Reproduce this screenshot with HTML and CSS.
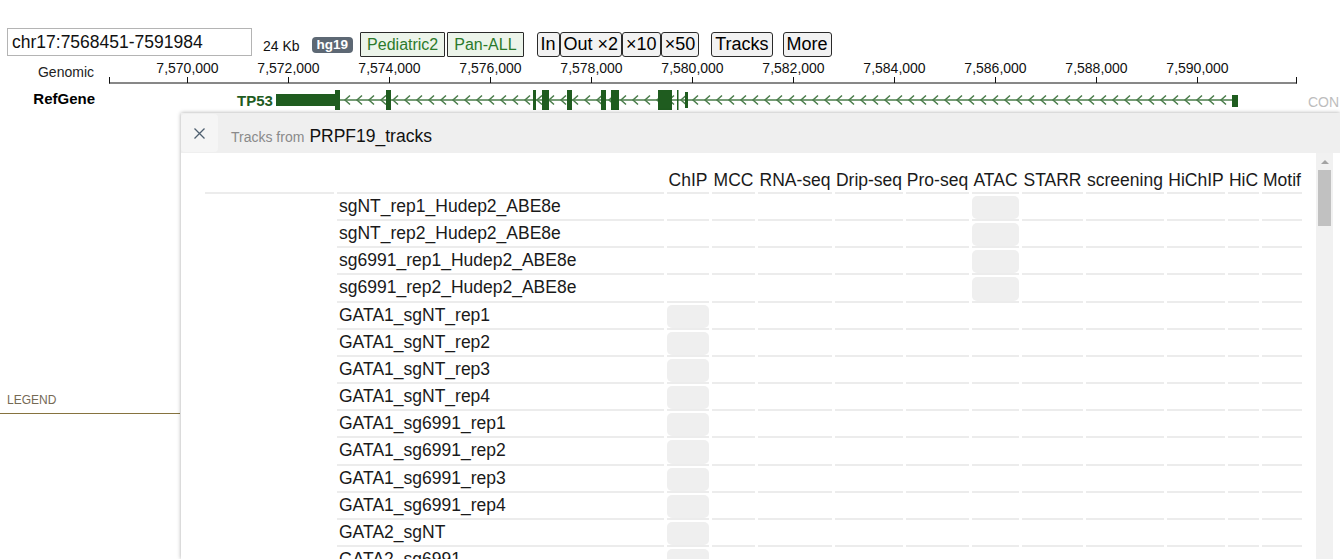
FILE: index.html
```html
<!DOCTYPE html>
<html>
<head>
<meta charset="utf-8">
<title>Genome browser</title>
<link rel="stylesheet" href="styles.css">
</head>
<body>
<div class="app">
  <div class="toolbar">
    <input class="locus" type="text" value="chr17:7568451-7591984">
    <span class="size">24 Kb</span>
    <span class="badge">hg19</span>
    <button class="gbtn gbtn-first">Pediatric2</button>
    <button class="gbtn gbtn-next">Pan-ALL</button>
    <div class="zoom-group">
      <button class="btn">In</button>
      <button class="btn">Out ×2</button>
      <button class="btn">×10</button>
      <button class="btn">×50</button>
    </div>
    <button class="btn btn-tracks">Tracks</button>
    <button class="btn btn-more">More</button>
  </div>

  <div class="track track-ruler">
    <div class="track-label">Genomic</div>
    <svg class="track-svg" width="1240" height="31" viewBox="0 0 1240 31">
      <line x1="9" y1="26" x2="1197" y2="26" class="axis"/>
      <line x1="9.5" y1="20" x2="9.5" y2="26.5" class="axis"/>
      <line x1="1196.5" y1="20" x2="1196.5" y2="26.5" class="axis"/>
      <g class="axis">
        <line x1="87.5" y1="20" x2="87.5" y2="26"/>
        <line x1="188.5" y1="20" x2="188.5" y2="26"/>
        <line x1="289.5" y1="20" x2="289.5" y2="26"/>
        <line x1="390.5" y1="20" x2="390.5" y2="26"/>
        <line x1="491.5" y1="20" x2="491.5" y2="26"/>
        <line x1="592.5" y1="20" x2="592.5" y2="26"/>
        <line x1="693.5" y1="20" x2="693.5" y2="26"/>
        <line x1="794.5" y1="20" x2="794.5" y2="26"/>
        <line x1="895.5" y1="20" x2="895.5" y2="26"/>
        <line x1="996.5" y1="20" x2="996.5" y2="26"/>
        <line x1="1097.5" y1="20" x2="1097.5" y2="26"/>
      </g>
      <g class="tick-labels">
        <text x="87.5" y="16">7,570,000</text>
        <text x="188.5" y="16">7,572,000</text>
        <text x="289.5" y="16">7,574,000</text>
        <text x="390.5" y="16">7,576,000</text>
        <text x="491.5" y="16">7,578,000</text>
        <text x="592.5" y="16">7,580,000</text>
        <text x="693.5" y="16">7,582,000</text>
        <text x="794.5" y="16">7,584,000</text>
        <text x="895.5" y="16">7,586,000</text>
        <text x="996.5" y="16">7,588,000</text>
        <text x="1097.5" y="16">7,590,000</text>
      </g>
    </svg>
  </div>

  <div class="track track-gene">
    <div class="track-label track-label-bold">RefGene</div>
    <svg class="track-svg" width="1240" height="25" viewBox="0 0 1240 25">
      <defs>
        <pattern id="chev" x="2" y="0" width="12" height="25" patternUnits="userSpaceOnUse">
          <path d="M8 7.5 L3 12 L8 16.5" fill="none" stroke="#4a7c4a" stroke-width="1.5"/>
        </pattern>
      </defs>
      <line x1="240" y1="12" x2="1132" y2="12" stroke="#4a7c4a" stroke-width="1.6"/>
      <rect x="241" y="0" width="890" height="25" fill="url(#chev)"/>
      <text x="137" y="18" class="gene-name">TP53</text>
      <g fill="#1f5c1f">
        <rect x="176" y="6" width="59" height="12"/>
        <rect x="235" y="2" width="5" height="20"/>
        <rect x="286" y="2" width="5" height="20"/>
        <rect x="433" y="2" width="3" height="20"/>
        <rect x="442" y="2" width="7" height="20"/>
        <rect x="467" y="2" width="5" height="20"/>
        <rect x="501" y="2" width="5" height="20"/>
        <rect x="511" y="2" width="8" height="20"/>
        <rect x="558" y="2" width="14" height="20"/>
        <rect x="577" y="2" width="1.5" height="20"/>
        <rect x="585" y="4" width="3" height="16"/>
        <rect x="1132" y="7" width="6" height="12"/>
      </g>
      <text x="1208" y="19" class="con">CON</text>
    </svg>
  </div>

  <div class="legend">LEGEND</div>

  <div class="panel">
    <div class="panel-head">
      <div class="close">
        <svg width="11" height="11" viewBox="0 0 11 11"><path d="M0.5 0.5 L10.5 10.5 M10.5 0.5 L0.5 10.5" stroke="#4f6070" stroke-width="1.3" fill="none"/></svg>
      </div>
      <div class="title"><span class="title-from">Tracks from</span><span class="title-name">PRPF19_tracks</span></div>
    </div>
    <div class="panel-body">
      <div class="table-wrap">
        <table class="tracks-table">
          <colgroup>
            <col class="col-group"><col class="col-name"><col class="col-chip"><col class="col-mcc"><col class="col-rna"><col class="col-drip"><col class="col-pro"><col class="col-atac"><col class="col-starr"><col class="col-screen"><col class="col-hichip"><col class="col-hic"><col class="col-motif">
          </colgroup>
          <thead>
            <tr><th></th><th></th><th>ChIP</th><th>MCC</th><th>RNA-seq</th><th>Drip-seq</th><th>Pro-seq</th><th>ATAC</th><th>STARR</th><th>screening</th><th>HiChIP</th><th>HiC</th><th>Motif</th></tr>
          </thead>
          <tbody>
            <tr><td class="group" rowspan="15"></td><td class="name">sgNT_rep1_Hudep2_ABE8e</td><td></td><td></td><td></td><td></td><td></td><td><div class="hit"></div></td><td></td><td></td><td></td><td></td><td></td></tr>
            <tr><td class="name">sgNT_rep2_Hudep2_ABE8e</td><td></td><td></td><td></td><td></td><td></td><td><div class="hit"></div></td><td></td><td></td><td></td><td></td><td></td></tr>
            <tr><td class="name">sg6991_rep1_Hudep2_ABE8e</td><td></td><td></td><td></td><td></td><td></td><td><div class="hit"></div></td><td></td><td></td><td></td><td></td><td></td></tr>
            <tr><td class="name">sg6991_rep2_Hudep2_ABE8e</td><td></td><td></td><td></td><td></td><td></td><td><div class="hit"></div></td><td></td><td></td><td></td><td></td><td></td></tr>
            <tr><td class="name">GATA1_sgNT_rep1</td><td><div class="hit"></div></td><td></td><td></td><td></td><td></td><td></td><td></td><td></td><td></td><td></td><td></td></tr>
            <tr><td class="name">GATA1_sgNT_rep2</td><td><div class="hit"></div></td><td></td><td></td><td></td><td></td><td></td><td></td><td></td><td></td><td></td><td></td></tr>
            <tr><td class="name">GATA1_sgNT_rep3</td><td><div class="hit"></div></td><td></td><td></td><td></td><td></td><td></td><td></td><td></td><td></td><td></td><td></td></tr>
            <tr><td class="name">GATA1_sgNT_rep4</td><td><div class="hit"></div></td><td></td><td></td><td></td><td></td><td></td><td></td><td></td><td></td><td></td><td></td></tr>
            <tr><td class="name">GATA1_sg6991_rep1</td><td><div class="hit"></div></td><td></td><td></td><td></td><td></td><td></td><td></td><td></td><td></td><td></td><td></td></tr>
            <tr><td class="name">GATA1_sg6991_rep2</td><td><div class="hit"></div></td><td></td><td></td><td></td><td></td><td></td><td></td><td></td><td></td><td></td><td></td></tr>
            <tr><td class="name">GATA1_sg6991_rep3</td><td><div class="hit"></div></td><td></td><td></td><td></td><td></td><td></td><td></td><td></td><td></td><td></td><td></td></tr>
            <tr><td class="name">GATA1_sg6991_rep4</td><td><div class="hit"></div></td><td></td><td></td><td></td><td></td><td></td><td></td><td></td><td></td><td></td><td></td></tr>
            <tr><td class="name">GATA2_sgNT</td><td><div class="hit"></div></td><td></td><td></td><td></td><td></td><td></td><td></td><td></td><td></td><td></td><td></td></tr>
            <tr><td class="name">GATA2_sg6991</td><td><div class="hit"></div></td><td></td><td></td><td></td><td></td><td></td><td></td><td></td><td></td><td></td><td></td></tr>
          </tbody>
        </table>
      </div>
      <div class="scrollbar">
        <div class="sb-up"></div>
        <div class="sb-thumb"></div>
      </div>
    </div>
  </div>
</div>
</body>
</html>
```

FILE: styles.css
```css
html, body {
  margin: 0;
  padding: 0;
}
body {
  font-family: "Liberation Sans", Arial, sans-serif;
  color: #111;
  background: #fff;
  width: 1340px;
  height: 559px;
  overflow: hidden;
}
.app {
  position: relative;
  width: 1340px;
  height: 559px;
  overflow: hidden;
}

/* toolbar */
.toolbar {
  display: flex;
  align-items: flex-start;
  height: 57px;
  box-sizing: border-box;
  padding: 28px 0 0 7px;
}
.locus {
  width: 245px;
  height: 28px;
  box-sizing: border-box;
  margin: 0;
  border: 1px solid #b4b4b4;
  padding: 0 4px;
  font-family: "Liberation Sans", Arial, sans-serif;
  font-size: 17.5px;
  color: #111;
  outline: none;
}
.size {
  margin: 10px 0 0 11px;
  font-size: 14px;
  line-height: 16px;
  color: #111;
}
.badge {
  margin: 9px 0 0 12px;
  height: 16px;
  line-height: 16px;
  padding: 0 5px;
  background: #5d6874;
  color: #fff;
  font-weight: bold;
  font-size: 13.5px;
  border-radius: 4px;
}
.gbtn {
  margin-top: 4px;
  height: 25px;
  padding: 0 6px;
  border: 1px solid #2a2a2a;
  border-radius: 1px;
  background: #ecf4ea;
  color: #2b7a2b;
  font-family: "Liberation Sans", Arial, sans-serif;
  font-size: 16px;
  line-height: 23px;
}
.gbtn-first { margin-left: 7px; }
.gbtn-next { margin-left: 2px; }
.zoom-group {
  display: flex;
  margin: 4px 0 0 13px;
}
.btn {
  height: 25px;
  margin: 0;
  padding: 0 3px;
  border: 1px solid #2a2a2a;
  border-radius: 3px;
  background: #f2f2f2;
  color: #000;
  font-family: "Liberation Sans", Arial, sans-serif;
  font-size: 18px;
  line-height: 23px;
}
.btn-tracks { margin: 4px 0 0 12px; }
.btn-more { margin: 4px 0 0 10px; }

/* tracks */
.track {
  display: flex;
  align-items: flex-start;
}
.track-ruler { height: 31px; }
.track-gene { height: 25px; }
.track-label {
  width: 100px;
  box-sizing: border-box;
  padding-right: 6px;
  text-align: right;
  font-size: 14px;
  line-height: 16px;
  padding-top: 7px;
  color: #222;
}
.track-label-bold {
  font-weight: bold;
  font-size: 15px;
  line-height: 17px;
  padding-top: 2px;
  padding-right: 5px;
  color: #000;
}
.track-svg {
  display: block;
  flex: none;
}
.axis {
  stroke: #111;
  stroke-width: 1;
}
.tick-labels text {
  font-family: "Liberation Sans", Arial, sans-serif;
  font-size: 14px;
  fill: #111;
  text-anchor: middle;
}
.gene-name {
  font-family: "Liberation Sans", Arial, sans-serif;
  font-size: 15px;
  font-weight: bold;
  fill: #1f5c1f;
}
.con {
  font-family: "Liberation Sans", Arial, sans-serif;
  font-size: 14px;
  fill: #bdbdbd;
}

/* legend */
.legend {
  margin-top: 280px;
  width: 180px;
  box-sizing: border-box;
  padding: 0 0 6px 7px;
  font-size: 12px;
  line-height: 14px;
  color: #756a55;
  border-bottom: 1px solid #86733f;
}

/* tracks panel overlay */
.panel {
  position: absolute;
  left: 181px;
  top: 113px;
  right: 0;
  bottom: 0;
  background: #fff;
  box-shadow: 0 0 4px rgba(0, 0, 0, 0.35);
  display: flex;
  flex-direction: column;
}
.panel-head {
  flex: none;
  height: 40px;
  background: #efefef;
  display: flex;
  align-items: center;
}
.close {
  width: 37px;
  height: 38px;
  background: #f5f5f5;
  border-radius: 4px;
  display: flex;
  align-items: center;
  justify-content: center;
}
.close svg { display: block; }
.title {
  margin-left: 13px;
  padding-top: 7px;
}
.title-from {
  font-size: 14px;
  color: #8a8a8a;
}
.title-name {
  font-size: 17.5px;
  color: #111;
  margin-left: 5px;
}
.panel-body {
  flex: 1;
  min-height: 0;
  display: flex;
  margin-right: 7px;
}
.table-wrap {
  flex: 1;
  min-width: 0;
  overflow: hidden;
  padding: 11px 0 0 21px;
}
.scrollbar {
  flex: none;
  width: 17px;
  background: #f1f1f1;
}
.sb-up {
  height: 17px;
  display: flex;
  align-items: center;
  justify-content: center;
}
.sb-up::before {
  content: "";
  border-left: 4px solid transparent;
  border-right: 4px solid transparent;
  border-bottom: 4px solid #a3a3a3;
}
.sb-thumb {
  height: 56px;
  margin: 0 2px;
  background: #c1c1c1;
}

/* table */
.tracks-table {
  table-layout: fixed;
  width: 1103px;
  border-collapse: separate;
  border-spacing: 3px 0;
  font-size: 17.5px;
  color: #1a1a1a;
}
.col-group { width: 129px; }
.col-name { width: 327px; }
.col-chip { width: 42px; }
.col-mcc { width: 43px; }
.col-rna { width: 74px; }
.col-drip { width: 68px; }
.col-pro { width: 63px; }
.col-atac { width: 47px; }
.col-starr { width: 61px; }
.col-screen { width: 78px; }
.col-hichip { width: 58px; }
.col-hic { width: 31px; }
.col-motif { width: 40px; }
.tracks-table th {
  font-weight: normal;
  padding: 4px 0 0;
  line-height: 24px;
  vertical-align: bottom;
  text-align: center;
  white-space: nowrap;
  border-bottom: 2px solid #ececec;
}
.tracks-table td {
  padding: 0;
  line-height: 25.15px;
  vertical-align: top;
  white-space: nowrap;
  overflow: hidden;
  border-bottom: 2px solid #ececec;
}
.tracks-table td.group {
  border-bottom: none;
}
.tracks-table td.name {
  text-indent: 2px;
}
.hit {
  margin-top: 2px;
  height: 23.15px;
  background: #efefef;
  border-radius: 5px;
}
```
